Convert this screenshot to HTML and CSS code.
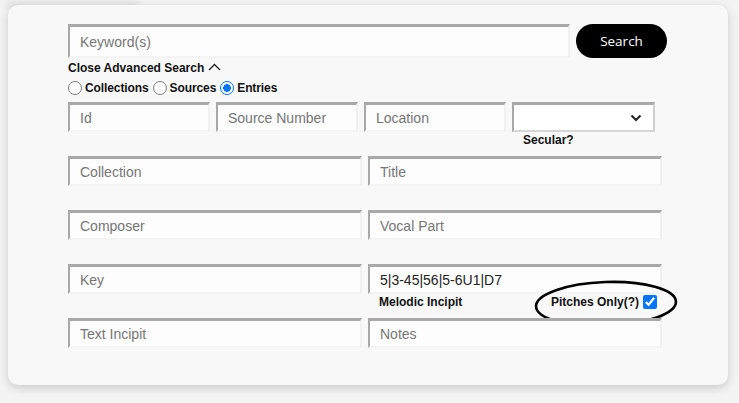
FILE: index.html
```html
<!DOCTYPE html>
<html lang="en">
<head>
<meta charset="utf-8">
<title>Advanced Search</title>
<link rel="stylesheet" href="styles.css">
</head>
<body>
<div class="page">
  <div class="tab-shadow"></div>
  <form class="card">
    <div class="search-row">
      <input class="field keyword" type="text" placeholder="Keyword(s)">
      <button class="search-btn" type="button">Search</button>
    </div>
    <div class="toggle">Close Advanced Search
      <svg class="caret" width="13" height="8" viewBox="0 0 13 8"><polyline points="1,7 6.5,1.5 12,7" fill="none" stroke="#222" stroke-width="1.4"/></svg>
    </div>
    <div class="scope">
      <label class="opt"><input class="radio" type="radio" name="scope">Collections</label>
      <label class="opt"><input class="radio" type="radio" name="scope">Sources</label>
      <label class="opt"><input class="radio" type="radio" name="scope" checked>Entries</label>
    </div>
    <div class="grid4">
      <div class="cell"><input class="field" type="text" placeholder="Id"></div>
      <div class="cell"><input class="field" type="text" placeholder="Source Number"></div>
      <div class="cell"><input class="field" type="text" placeholder="Location"></div>
      <div class="cell">
        <div class="select-wrap">
          <select class="field select"><option></option><option>Yes</option><option>No</option></select>
          <svg class="chev" width="12" height="8" viewBox="0 0 12 8"><polyline points="1.5,1.5 6,6 10.5,1.5" fill="none" stroke="#222" stroke-width="2"/></svg>
        </div>
        <div class="hint">Secular?</div>
      </div>
    </div>
    <div class="grid2">
      <div class="cell"><input class="field" type="text" placeholder="Collection"></div>
      <div class="cell"><input class="field" type="text" placeholder="Title"></div>
      <div class="cell"><input class="field" type="text" placeholder="Composer"></div>
      <div class="cell"><input class="field" type="text" placeholder="Vocal Part"></div>
      <div class="cell"><input class="field" type="text" placeholder="Key"></div>
      <div class="cell melodic">
        <input class="field" type="text" value="5|3-45|56|5-6U1|D7">
        <div class="hint hint-row">
          <span>Melodic Incipit</span>
          <label class="pitches">Pitches Only(?)<input type="checkbox" checked></label>
        </div>
        <svg class="circle-note" width="146" height="50" viewBox="0 0 146 50"><ellipse cx="72" cy="25" rx="70" ry="22" transform="rotate(-2 72 25)" fill="none" stroke="#000" stroke-width="2.6"/></svg>
      </div>
      <div class="cell"><input class="field" type="text" placeholder="Text Incipit"></div>
      <div class="cell"><input class="field" type="text" placeholder="Notes"></div>
    </div>
  </form>
</div>
</body>
</html>
```
FILE: styles.css
```css
* { box-sizing: border-box; }
html, body { margin: 0; padding: 0; }
body {
  background: #f3f3f3;
  font-family: "Liberation Sans", Arial, sans-serif;
  color: #111;
  width: 739px;
  height: 403px;
  overflow: hidden;
}
.page {
  padding: 0 11px 0 8px;
}
.tab-shadow {
  width: 130px;
  height: 0;
  box-shadow: 0 0 7px 2px rgba(0, 0, 0, 0.13);
}
.card {
  margin-top: 5px;
  width: 720px;
  background: #f8f8f8;
  border-radius: 10px;
  box-shadow: 0 3px 10px rgba(0, 0, 0, 0.17);
  padding: 19px 0 13px 60px;
}
.search-row {
  display: flex;
  gap: 6px;
  height: 34px;
}
.field {
  display: block;
  width: 100%;
  height: 30px;
  margin: 0;
  background: #fdfdfd;
  border-style: solid;
  border-width: 3px 2px 2px 2px;
  border-color: #a8a8a8 #f0f0f0 #f4f4f4 #a8a8a8;
  padding: 0 10px;
  font-family: "Liberation Sans", Arial, sans-serif;
  font-size: 14px;
  color: #222;
  outline: none;
  border-radius: 0;
}
.field::placeholder { color: #767676; }
.keyword {
  width: 502px;
  height: 34px;
}
.search-btn {
  width: 91px;
  height: 34px;
  border: none;
  border-radius: 17px;
  background: #000;
  color: #fff;
  font-family: "Open Sans", sans-serif;
  font-size: 13.5px;
  padding: 0 0 1px;
}
.toggle {
  margin-top: 3px;
  font-size: 12px;
  font-weight: bold;
  line-height: 14px;
  display: flex;
  align-items: center;
  gap: 4px;
}
.caret { margin-top: -3px; }
.scope {
  margin-top: 5px;
  height: 16px;
  display: flex;
  align-items: center;
  gap: 4px;
  font-size: 12px;
  font-weight: bold;
  letter-spacing: -0.1px;
}
.opt {
  display: flex;
  align-items: center;
  gap: 3px;
}
.radio {
  appearance: none;
  -webkit-appearance: none;
  margin: 0;
  width: 14px;
  height: 14px;
  border-radius: 50%;
  border: 1.5px solid #7a7a7a;
  background: #fff;
}
.radio:checked {
  border-color: #0075ff;
  background: radial-gradient(circle, #0075ff 0 3.6px, #fff 4px);
}
.grid4 {
  margin-top: 6px;
  display: grid;
  grid-template-columns: repeat(4, 142px);
  column-gap: 6px;
  grid-auto-rows: 54px;
}
.grid2 {
  display: grid;
  grid-template-columns: repeat(2, 294px);
  column-gap: 6px;
  grid-auto-rows: 54px;
}
.cell { position: relative; }
.select-wrap { position: relative; width: 143px; }
.select {
  appearance: none;
  -webkit-appearance: none;
  border-color: #a8a8a8 #cfcfcf #d6d6d6 #a8a8a8;
  background: #fff;
}
.chev {
  position: absolute;
  right: 13px;
  top: 12px;
  pointer-events: none;
}
.hint {
  margin-top: 1px;
  padding-left: 11px;
  font-size: 12px;
  font-weight: bold;
  line-height: 14px;
  color: #111;
}
.hint-row {
  display: flex;
  justify-content: space-between;
  align-items: center;
  padding-right: 5px;
}
.pitches {
  display: flex;
  align-items: center;
  gap: 4px;
}
.pitches input {
  margin: 0;
  width: 14px;
  height: 14px;
}
.circle-note {
  position: absolute;
  left: 166px;
  top: 15px;
  pointer-events: none;
}
```
